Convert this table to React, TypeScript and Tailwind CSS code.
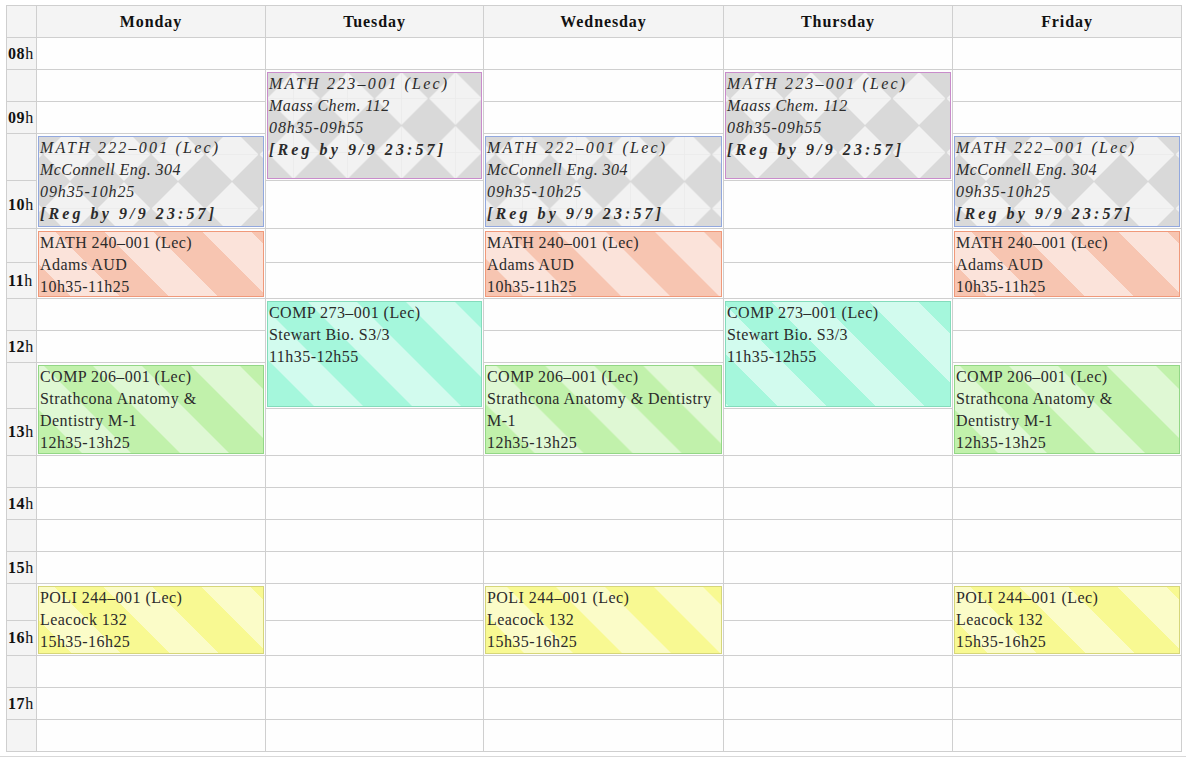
import React from "react";

const COL = ["", "col-start-1", "col-start-2", "col-start-3", "col-start-4", "col-start-5", "col-start-6"];
const ROW = [
  "",
  "row-start-1", "row-start-2", "row-start-3", "row-start-4", "row-start-5", "row-start-6", "row-start-7",
  "row-start-8", "row-start-9", "row-start-10", "row-start-11", "row-start-12", "row-start-13", "row-start-14",
  "row-start-15", "row-start-16", "row-start-17", "row-start-18", "row-start-19", "row-start-20", "row-start-21",
];
const SPAN = ["", "row-span-1", "row-span-2", "row-span-3"];

const DAYS = ["Monday", "Tuesday", "Wednesday", "Thursday", "Friday"];

type Kind = "grayBlue" | "grayPink" | "orange" | "teal" | "green" | "yellow";

interface Ev {
  row: number;
  span: number;
  cols: number[];
  kind: Kind;
  lines: string[];
  italic: boolean;
  reg?: boolean;
}

const EVENTS: Ev[] = [
  { row: 3, span: 3, cols: [3, 5], kind: "grayPink", italic: true, reg: true, lines: ["MATH 223–001 (Lec)", "Maass Chem. 112", "08h35-09h55"] },
  { row: 5, span: 2, cols: [2, 4, 6], kind: "grayBlue", italic: true, reg: true, lines: ["MATH 222–001 (Lec)", "McConnell Eng. 304", "09h35-10h25"] },
  { row: 7, span: 2, cols: [2, 4, 6], kind: "orange", italic: false, lines: ["MATH 240–001 (Lec)", "Adams AUD", "10h35-11h25"] },
  { row: 9, span: 3, cols: [3, 5], kind: "teal", italic: false, lines: ["COMP 273–001 (Lec)", "Stewart Bio. S3/3", "11h35-12h55"] },
  { row: 11, span: 2, cols: [2, 4, 6], kind: "green", italic: false, lines: ["COMP 206–001 (Lec)", "Strathcona Anatomy & Dentistry M-1", "12h35-13h25"] },
  { row: 17, span: 2, cols: [2, 4, 6], kind: "yellow", italic: false, lines: ["POLI 244–001 (Lec)", "Leacock 132", "15h35-16h25"] },
];

const DIAMOND =
  "bg-[#d9d9d9] bg-[linear-gradient(135deg,#f2f2f2_25%,transparent_25%),linear-gradient(225deg,#f2f2f2_25%,transparent_25%),linear-gradient(315deg,#f2f2f2_25%,transparent_25%),linear-gradient(45deg,#f2f2f2_25%,transparent_25%)] bg-[length:54px_54px] bg-center";

const KIND: Record<Kind, string> = {
  grayBlue: `border-[#92a8de] ${DIAMOND}`,
  grayPink: `border-[#c98ccb] ${DIAMOND}`,
  orange:
    "border-[#f0997a] bg-[linear-gradient(45deg,#fbe3da_17.8%,#f7c5b1_17.8%,#f7c5b1_42.8%,#fbe3da_42.8%,#fbe3da_67.8%,#f7c5b1_67.8%,#f7c5b1_92.8%,#fbe3da_92.8%)] bg-[length:98px_98px] bg-center",
  teal:
    "border-[#84dcbc] bg-[linear-gradient(45deg,#d2fbee_17.8%,#a5f7dc_17.8%,#a5f7dc_42.8%,#d2fbee_42.8%,#d2fbee_67.8%,#a5f7dc_67.8%,#a5f7dc_92.8%,#d2fbee_92.8%)] bg-[length:98px_98px] bg-center",
  green:
    "border-[#93d786] bg-[linear-gradient(45deg,#dff8d4_17.8%,#c1f1ab_17.8%,#c1f1ab_42.8%,#dff8d4_42.8%,#dff8d4_67.8%,#c1f1ab_67.8%,#c1f1ab_92.8%,#dff8d4_92.8%)] bg-[length:98px_98px] bg-center",
  yellow:
    "border-[#d6d67a] bg-[linear-gradient(45deg,#fbfcc8_17.8%,#f8f992_17.8%,#f8f992_42.8%,#fbfcc8_42.8%,#fbfcc8_67.8%,#f8f992_67.8%,#f8f992_92.8%,#fbfcc8_92.8%)] bg-[length:98px_98px] bg-center",
};

function EventCell({ ev, col }: { ev: Ev; col: number }) {
  return (
    <div className={`${COL[col]} ${ROW[ev.row]} ${SPAN[ev.span]} bg-[#fefefe] p-[2px_1px_1px_1px]`}>
      <div className={`h-full overflow-hidden border ${KIND[ev.kind]}`}>
        <div className="px-[1px] text-[16px] leading-[22px] text-[#2b2b2b]">
          {ev.lines.map((l, i) => (
            <div
              key={i}
              className={
                ev.italic
                  ? i === 0
                    ? "italic tracking-[2.2px]"
                    : i === 2
                    ? "italic tracking-[0.9px]"
                    : "italic tracking-[0.45px]"
                  : "tracking-[0.45px]"
              }
            >
              {l}
            </div>
          ))}
          {ev.reg && <div className="font-bold italic tracking-[3.1px]">[Reg by 9/9 23:57]</div>}
        </div>
      </div>
    </div>
  );
}

export default function App() {
  const covered = new Set<string>();
  EVENTS.forEach((ev) =>
    ev.cols.forEach((c) => {
      for (let r = ev.row; r < ev.row + ev.span; r++) covered.add(`${r}-${c}`);
    })
  );

  const cells: React.ReactNode[] = [];
  cells.push(<div key="h0" className={`${COL[1]} ${ROW[1]} bg-[#f4f4f4]`} />);
  DAYS.forEach((d, i) =>
    cells.push(
      <div
        key={`h${d}`}
        className={`${COL[i + 2]} ${ROW[1]} flex items-center justify-center bg-[#f4f4f4] text-[16px] font-bold tracking-[0.9px] text-[#111]`}
      >
        {d}
      </div>
    )
  );
  for (let r = 2; r <= 21; r++) {
    const labeled = r % 2 === 0;
    const hour = String(8 + (r - 2) / 2).padStart(2, "0");
    cells.push(
      <div key={`t${r}`} className={`${COL[1]} ${ROW[r]} flex items-center bg-[#f4f4f4] pl-[1px] text-[16px] text-[#111]`}>
        {labeled && (
          <span className="tracking-[0.6px]">
            <span className="font-bold">{hour}</span>h
          </span>
        )}
      </div>
    );
    for (let c = 2; c <= 6; c++) {
      if (covered.has(`${r}-${c}`)) continue;
      cells.push(<div key={`c${r}-${c}`} className={`${COL[c]} ${ROW[r]} bg-[#fefefe]`} />);
    }
  }
  EVENTS.forEach((ev) => ev.cols.forEach((c) => cells.push(<EventCell key={`e${ev.row}-${c}`} ev={ev} col={c} />)));

  return (
    <div className="min-h-[757px] bg-white font-['Liberation_Serif',serif]">
      <div className="pl-[6px] pr-[4px] pt-[5px]">
        <div className="grid w-[1176px] grid-cols-[29px_228px_217px_239px_228px_228px] grid-rows-[31px_31px_31px_31px_46px_47px_33px_35px_31px_31px_45px_46px_31px_31px_31px_31px_36px_34px_31px_31px_31px] gap-[1px] border border-[#cfcfcf] bg-[#cfcfcf]">
          {cells}
        </div>
      </div>
      <div className="mt-[4px] border-t border-[#d8d8d8]" />
    </div>
  );
}
